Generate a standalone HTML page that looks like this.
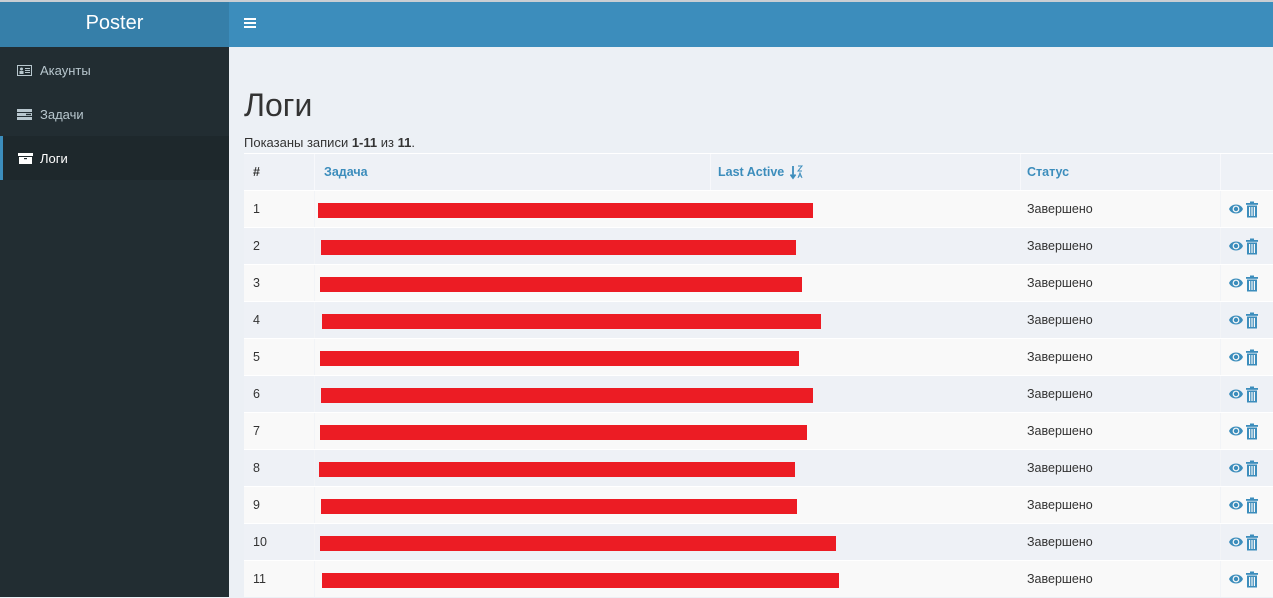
<!DOCTYPE html>
<html><head><meta charset="utf-8"><style>
*{box-sizing:border-box;margin:0;padding:0}
body{width:1273px;height:597px;overflow:hidden;background:#ecf0f5;font-family:"Liberation Sans","DejaVu Sans",sans-serif;position:relative}
.topline{position:absolute;left:0;top:0;width:1273px;height:2px;background:#c9ced3}
.logo{position:absolute;left:0;top:2px;width:229px;height:45px;background:#367fa9;color:#fff;font-size:20px;text-align:center;line-height:42px}
.nav{position:absolute;left:229px;top:2px;width:1044px;height:45px;background:#3c8dbc}
.burger{position:absolute;left:15px;top:16px;width:12px}
.burger i{display:block;height:2px;background:#fff;margin-bottom:2px}
.side{position:absolute;left:0;top:47px;width:229px;height:550px;background:#222d32}
.item{position:absolute;left:0;width:229px;height:44px;color:#b8c7ce;font-size:13px;line-height:46px;padding-left:40px}
.item.act{background:#1e282c;color:#fff;border-left:3px solid #3c8dbc;padding-left:37px}
.ic{position:absolute;left:17px;top:17px;width:15px;height:11px}
h1{position:absolute;left:244px;top:87px;font-size:32px;font-weight:normal;color:#333}
.sum{position:absolute;left:244px;top:135px;font-size:13px;color:#333}
.tbl{position:absolute;left:244px;top:153px;width:1029px}
.row{position:relative;height:37px;font-size:12.5px;color:#333;border-top:1px solid #fff}
.hd{background:#eef1f6;font-weight:bold}
.hd span{color:#3c8dbc;}
.c{position:absolute;top:0;line-height:37px;white-space:nowrap}
.odd{background:#f9f9f9}.even{background:#eef1f6}
.bar{position:absolute;background:#ec1c24;height:15px}
.vl{position:absolute;top:0;bottom:0;width:1px;background:#f2f4f7}
</style></head><body>
<div class="topline"></div>
<div class="logo">Poster</div>
<div class="nav"><div class="burger"><i></i><i></i><i></i></div></div>
<div class="side">
<div class="item" style="top:1px"><svg class="ic" viewBox="0 0 15 11"><rect x="0.5" y="0.5" width="14" height="10" fill="none" stroke="#b8c7ce"/><circle cx="4.5" cy="4" r="1.5" fill="#b8c7ce"/><rect x="2.5" y="6" width="4" height="3" fill="#b8c7ce"/><rect x="8" y="3" width="5" height="1" fill="#b8c7ce"/><rect x="8" y="5" width="5" height="1" fill="#b8c7ce"/><rect x="8" y="7" width="5" height="1" fill="#b8c7ce"/></svg>Акаунты</div>
<div class="item" style="top:45px"><svg class="ic" viewBox="0 0 15 11"><rect x="0" y="0" width="15" height="3" fill="#b8c7ce"/><rect x="0" y="4" width="15" height="3" fill="#b8c7ce"/><rect x="0" y="8" width="15" height="3" fill="#b8c7ce"/><rect x="9" y="4.8" width="5" height="1.4" fill="#222d32"/></svg>Задачи</div>
<div class="item act" style="top:89px"><svg class="ic" style="left:15px" viewBox="0 0 15 11"><rect x="0" y="0" width="15" height="3" fill="#fff"/><rect x="1" y="4" width="13" height="7" fill="#fff"/><rect x="6" y="5" width="3" height="1.2" fill="#1e282c"/></svg>Логи</div>
</div>
<h1>Логи</h1>
<div class="sum">Показаны записи <b>1-11</b> из <b>11</b>.</div>
<div class="tbl">
<div class="row hd"><div class="c" style="left:9px">#</div><div class="c" style="left:80px"><span>Задача</span></div><div class="c" style="left:474px"><span>Last Active</span><svg style="position:absolute;left:72px;top:11px" width="14" height="15" viewBox="0 0 14 15"><path d="M3 1v11M0.5 9.5L3 13l2.5-3.5" stroke="#3c8dbc" stroke-width="1.8" fill="none"/><path d="M8 1h4l-4 5h4" stroke="#3c8dbc" stroke-width="1" fill="none"/><path d="M8 13l2-5 2 5M8.8 11h2.4" stroke="#3c8dbc" stroke-width="1" fill="none"/></svg></div><div class="c" style="left:783px"><span>Статус</span></div>
<div class="vl" style="left:70px;background:#f7f8fb"></div><div class="vl" style="left:466px;background:#f7f8fb"></div><div class="vl" style="left:776px;background:#f7f8fb"></div><div class="vl" style="left:976px;background:#f7f8fb"></div></div>
</div>
<div id="rows" style="position:absolute;left:244px;top:190px;width:1029px"></div>
<script>
var bars=[[318,813],[321,796],[320,802],[322,821],[320,799],[321,813],[320,807],[319,795],[321,797],[320,836],[322,839]];
var h='';
for(var i=0;i<11;i++){var b=bars[i];
h+='<div class="row '+(i%2?'even':'odd')+'"><div class="c" style="left:9px">'+(i+1)+'</div><div class="bar" style="left:'+(b[0]-244)+'px;top:12px;width:'+(b[1]-b[0])+'px"></div><div class="c" style="left:783px">Завершено</div>'+
'<svg style="position:absolute;left:984px;top:10px" width="32" height="17" viewBox="0 0 32 17"><path d="M1 8C3.5 2 12.5 2 15 8C12.5 14 3.5 14 1 8Z" fill="#3c8dbc"/><circle cx="8" cy="8" r="3.4" fill="#f9f9f9"/><circle cx="8" cy="8" r="2.2" fill="#3c8dbc"/><rect x="18" y="2" width="12" height="1.8" fill="#3c8dbc"/><rect x="22" y="0.5" width="4" height="2" fill="#3c8dbc"/><path d="M19 4.5h10v12h-10z" fill="#3c8dbc"/><rect x="21" y="6" width="1.2" height="9" fill="#f9f9f9"/><rect x="23.4" y="6" width="1.2" height="9" fill="#f9f9f9"/><rect x="25.8" y="6" width="1.2" height="9" fill="#f9f9f9"/></svg>'+
'<div class="vl" style="left:70px"></div><div class="vl" style="left:976px"></div></div>';}
document.getElementById('rows').innerHTML=h;
</script>
</body></html>
